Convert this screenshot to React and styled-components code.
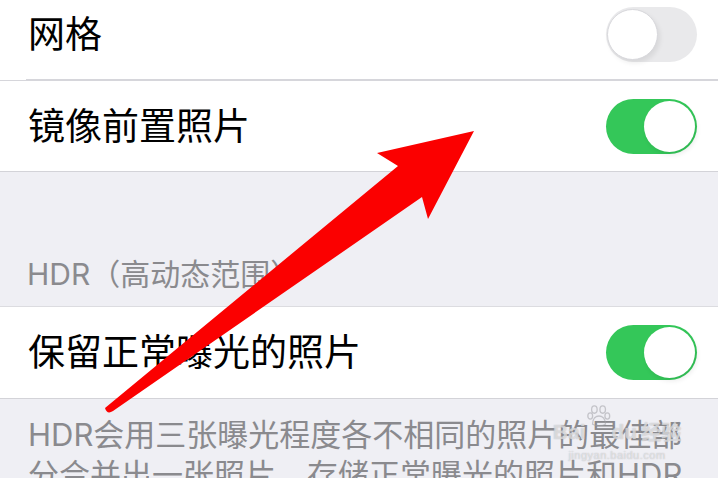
import * as React from "react";
import styled, { createGlobalStyle } from "styled-components";

const GlobalStyle = createGlobalStyle`
  html, body {
    margin: 0;
    padding: 0;
    background: #efeff4;
  }
  body {
    font-family: "Inter", "Noto Sans CJK SC", sans-serif;
    -webkit-font-smoothing: antialiased;
  }
`;

const rows = [
  { label: "网格", on: false, inset: 26 },
  { label: "镜像前置照片", on: true, inset: 0 },
];

const App = () => {
  return (
    <Screen>
      <GlobalStyle />
      <Group $first>
        {rows.map((row) => (
          <Row key={row.label} $inset={row.inset}>
            <Label>{row.label}</Label>
            <Switch $on={row.on}>
              <Knob $on={row.on} />
            </Switch>
          </Row>
        ))}
      </Group>

      <SectionHeader>HDR（高动态范围）</SectionHeader>

      <Group $bordered>
        <Row $inset={0}>
          <Label>保留正常曝光的照片</Label>
          <Switch $on>
            <Knob $on />
          </Switch>
        </Row>
      </Group>

      <Footer>
        HDR会用三张曝光程度各不相同的照片的最佳部分合并出一张照片，存储正常曝光的照片和HDR版本的照片。
      </Footer>

      <Watermark>
        <WatermarkLogo>
          <span>Bai</span>
          <svg width="24" height="24" viewBox="0 0 26 24">
            <g fill="none" stroke="rgba(160,160,165,0.55)" strokeWidth="1.4">
              <ellipse cx="8" cy="5" rx="3" ry="4" />
              <ellipse cx="17" cy="5" rx="3" ry="4" />
              <ellipse cx="3.5" cy="12" rx="2.6" ry="3.4" />
              <ellipse cx="22" cy="12" rx="2.6" ry="3.4" />
              <path d="M6 21 C6 14 10 12 13 12 C16 12 20 14 20 21 C17 23 9 23 6 21 Z" />
            </g>
          </svg>
          <span>du</span>
          <WatermarkCn>经验</WatermarkCn>
        </WatermarkLogo>
        <WatermarkUrl>jingyan.baidu.com</WatermarkUrl>
      </Watermark>

      <Arrow width="718" height="478" viewBox="0 0 718 478">
        <path
          d="M474 131 L428 219 L422 197 L113 411 Q107 415 105 408 L398 166 L377 153 Z"
          fill="#fb0000"
        />
      </Arrow>
    </Screen>
  );
};

export default App;

const Screen = styled.div`
  position: relative;
  width: 718px;
  height: 478px;
  overflow: hidden;
  background: #efeff4;
`;

const Group = styled.section`
  background: #ffffff;
  margin-top: ${(props) => (props.$first ? "-11px" : "0")};
  border-top: ${(props) => (props.$bordered ? "1px solid #dcdce0" : "none")};
  border-bottom: 1px solid #d3d3d8;
`;

const Row = styled.div`
  position: relative;
  display: flex;
  align-items: center;
  justify-content: space-between;
  height: 91px;
  padding: 0 21px 0 28px;
  box-sizing: border-box;

  & + & {
    border-top: 1px solid #d6d6db;
  }

  &:not(:last-child)::after {
    content: "";
    position: absolute;
    left: ${(props) => props.$inset}px;
    right: 0;
    bottom: 0;
    height: 1px;
    background: #d6d6db;
  }
`;

const Label = styled.span`
  font-size: 37px;
  line-height: 1;
  color: #000000;
`;

const Switch = styled.div`
  position: relative;
  flex: none;
  width: 91px;
  height: 55px;
  border-radius: 28px;
  box-sizing: border-box;
  background: ${(props) => (props.$on ? "#34c759" : "#e9e9eb")};
`;

const Knob = styled.div`
  position: absolute;
  top: 2px;
  left: ${(props) => (props.$on ? "38px" : "1px")};
  width: 51px;
  height: 51px;
  border-radius: 50%;
  background: #ffffff;
  box-sizing: border-box;
  border: ${(props) => (props.$on ? "none" : "1.5px solid #d8d8dc")};
  box-shadow: 2px 3px 5px rgba(0, 0, 0, 0.08);
`;

const SectionHeader = styled.div`
  height: 134px;
  box-sizing: border-box;
  display: flex;
  align-items: flex-end;
  padding: 0 0 17px 27px;
  font-size: 30px;
  line-height: 1;
  color: #8a8a8e;
`;

const Footer = styled.p`
  margin: 0;
  padding: 16px 30px 0 28px;
  font-size: 31px;
  line-height: 40px;
  color: #8a8a8e;
`;

const Watermark = styled.div`
  position: absolute;
  left: 552px;
  top: 402px;
  width: 130px;
  display: flex;
  flex-direction: column;
  align-items: center;
  color: rgba(255, 255, 255, 0.55);
  text-shadow: 0 0 1px rgba(140, 140, 145, 0.7);
  pointer-events: none;
  white-space: nowrap;
`;

const WatermarkLogo = styled.div`
  display: flex;
  align-items: flex-end;
  gap: 1px;
  font-family: "Liberation Sans", sans-serif;
  font-size: 21px;
  font-weight: 700;
  line-height: 1;
  height: 42px;
  padding-bottom: 2px;
  box-sizing: border-box;

  & svg {
    margin-bottom: 14px;
  }
`;

const WatermarkCn = styled.span`
  font-family: "Noto Sans CJK SC", sans-serif;
  font-size: 20px;
  margin-left: 3px;
`;

const WatermarkUrl = styled.div`
  font-family: "Liberation Sans", sans-serif;
  font-size: 11px;
  letter-spacing: 0.5px;
  line-height: 1;
  margin-top: 6px;
`;

const Arrow = styled.svg`
  position: absolute;
  left: 0;
  top: 0;
  pointer-events: none;
`;
